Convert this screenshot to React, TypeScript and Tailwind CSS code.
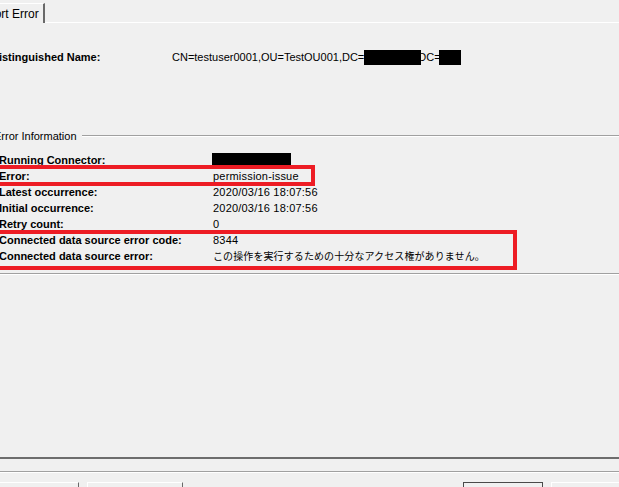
import React from 'react';

const rows: { label: string; value: React.ReactNode }[] = [
  { label: 'Running Connector:', value: <span className="inline-block w-[79px] h-[12px] -ml-[1px] mt-[-4px] bg-black align-middle" /> },
  { label: 'Error:', value: 'permission-issue' },
  { label: 'Latest occurrence:', value: '2020/03/16 18:07:56' },
  { label: 'Initial occurrence:', value: '2020/03/16 18:07:56' },
  { label: 'Retry count:', value: '0' },
  { label: 'Connected data source error code:', value: '8344' },
  { label: 'Connected data source error:', value: <span className="text-[10px] tracking-[0.1px]">この操作を実行するための十分なアクセス権がありません。</span> },
];

const EtchedLine = ({ className = '' }: { className?: string }) => (
  <div className={`h-[2px] border-t border-t-[#a0a0a0] border-b border-b-white ${className}`} />
);

export default function App() {
  return (
    <div
      className="relative w-[619px] h-[487px] overflow-hidden bg-[#f0f0f0] text-black text-[11px] leading-[16px]"
      style={{ fontFamily: '"Liberation Sans", "Noto Sans CJK JP", sans-serif' }}
    >
      {/* tab strip */}
      <div className="flex items-end h-[23px]">
        <div className="-ml-[29px] mt-[3px] h-[20px] pl-[3px] pr-[4px] flex items-center border-t border-t-white border-r-2 border-r-[#696969] text-[12px]">
          Export Error
        </div>
        <div className="flex-1 border-b border-b-white" />
      </div>

      {/* distinguished name */}
      <div className="flex h-[16px] mt-[26px] items-center">
        <div className="w-[181px] -ml-[9px] font-bold shrink-0">Distinguished Name:</div>
        <div className="flex items-center whitespace-nowrap">
          <span>CN=testuser0001,OU=TestOU001,DC=</span>
          <span className="inline-block w-[57px] h-[15px] bg-black -mr-[3px] relative" />
          <span>DC=</span>
          <span className="inline-block w-[22px] h-[15px] bg-black -ml-[2px] relative" />
        </div>
      </div>

      {/* group header */}
      <div className="flex items-center h-[16px] mt-[63px]">
        <span className="-ml-[6px] whitespace-nowrap">Error Information</span>
        <EtchedLine className="flex-1 ml-[5px]" />
      </div>

      {/* rows */}
      <div className="mt-[8px] flex flex-col">
        {rows.map((r) => (
          <div key={r.label} className="flex h-[16px] items-center">
            <div className="w-[214px] -ml-[1px] font-bold shrink-0 whitespace-nowrap">{r.label}</div>
            <div className="whitespace-nowrap tracking-[0.2px]">{r.value}</div>
          </div>
        ))}
      </div>

      <EtchedLine className="mt-[9px]" />

      {/* bottom */}
      <div className="mt-[182px] h-[2px] bg-[#6d6d6d]" />
      <EtchedLine className="mt-[12px]" />
      <div className="flex mt-[9px] h-[24px]">
        <div className="-ml-[10px] w-[89px] border-t border-l border-white border-r border-r-[#696969]" />
        <div className="ml-[8px] w-[96px] border-t border-l border-white border-r border-r-[#696969]" />
        <div className="ml-[280px] w-[80px] border border-[#4a4a4a]" />
        <div className="ml-[8px] flex-1 border-t border-l border-white" />
      </div>

      {/* annotation boxes */}
      <div className="absolute -left-[10px] top-[165px] w-[325px] h-[21px] border-4 border-[#ed1c24]" />
      <div className="absolute -left-[10px] top-[230px] w-[527px] h-[40px] border-4 border-[#ed1c24]" />
    </div>
  );
}
